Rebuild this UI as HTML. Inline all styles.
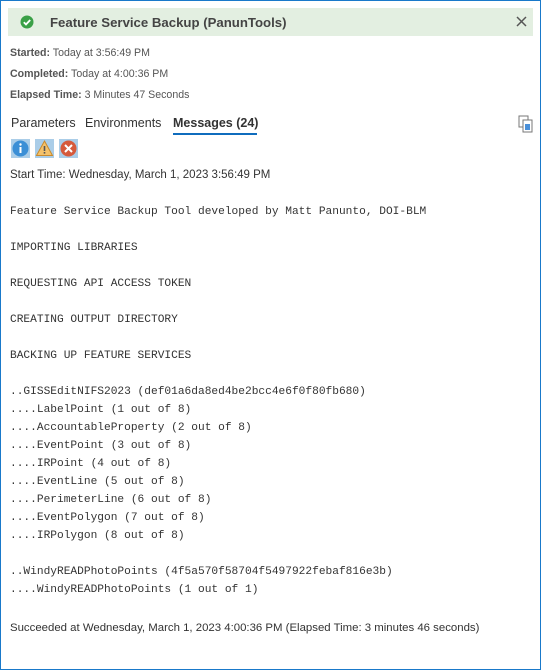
<!DOCTYPE html>
<html><head><style>
body{margin:0;width:541px;height:670px;overflow:hidden;background:#fff;font-family:"Liberation Sans",sans-serif;color:#333}
.frame{position:absolute;left:0;top:0;width:539px;height:668px;border:1px solid #1979ca}
.hdr{position:absolute;left:8px;top:8px;width:525px;height:28px;background:#e3efe1}
.t{position:absolute;white-space:pre;font-size:12px;line-height:14px}
.m{position:absolute;white-space:pre;font-family:"Liberation Mono",monospace;font-size:11.2px;line-height:14px;color:#333}
.ic{position:absolute;top:139px;width:19px;height:19px;background:#aacde8}
</style></head><body>
<div class="frame"></div>
<div class="hdr"></div>
<svg style="position:absolute;left:20px;top:15px" width="14" height="14"><circle cx="7" cy="7" r="6.5" fill="#3aa047"/><path d="M3.8 7.2l2.2 2.2 4.2-4.4" stroke="#fff" stroke-width="1.8" fill="none"/></svg>
<div class="t" style="left:50px;top:14px;font-size:13.2px;line-height:17px;font-weight:bold;color:#444">Feature Service Backup (PanunTools)</div>
<svg style="position:absolute;left:516px;top:16px" width="11" height="11"><path d="M1 1l9 9M10 1L1 10" stroke="#555" stroke-width="1.5"/></svg>
<div class="t" style="left:10px;top:46px;font-size:10.6px;color:#555"><b>Started:</b> Today at 3:56:49 PM</div>
<div class="t" style="left:10px;top:67px;font-size:10.6px;color:#555"><b>Completed:</b> Today at 4:00:36 PM</div>
<div class="t" style="left:10px;top:88px;font-size:10.6px;color:#555"><b>Elapsed Time:</b> 3 Minutes 47 Seconds</div>
<div class="t" style="left:11px;top:116px;font-size:12.5px;color:#333">Parameters</div>
<div class="t" style="left:85px;top:116px;font-size:12.5px;color:#333">Environments</div>
<div class="t" style="left:173px;top:116px;font-size:12.5px;color:#333;font-weight:bold">Messages (24)</div>
<div style="position:absolute;left:173px;top:133px;width:84px;height:2px;background:#0f6cbd"></div>
<svg style="position:absolute;left:518px;top:115px" width="16" height="18"><rect x="1" y="1" width="9" height="11" fill="#fff" stroke="#777"/><rect x="5" y="5" width="9" height="12" fill="#fff" stroke="#777"/><rect x="7" y="9" width="5" height="6" fill="#4a90d9"/></svg>
<div class="ic" style="left:11px"><svg width="19" height="19"><circle cx="9.5" cy="9.5" r="8" fill="#3b8fd6"/><rect x="8.5" y="8" width="2" height="6" fill="#fff"/><circle cx="9.5" cy="5.5" r="1.2" fill="#fff"/></svg></div>
<div class="ic" style="left:35px"><svg width="19" height="19"><path d="M9.5 2L17.5 16.5H1.5Z" fill="#f4c26b" stroke="#c98a2c"/><rect x="8.7" y="7" width="1.6" height="5" fill="#555"/><rect x="8.7" y="13" width="1.6" height="1.6" fill="#555"/></svg></div>
<div class="ic" style="left:59px"><svg width="19" height="19"><circle cx="9.5" cy="9.5" r="8" fill="#d65a3c"/><path d="M6 6l7 7M13 6l-7 7" stroke="#fff" stroke-width="2"/></svg></div>
<div class="t" style="left:10px;top:168px;font-size:11.5px">Start Time: Wednesday, March 1, 2023 3:56:49 PM</div>
<div class="m" style="left:10px;top:205px">Feature Service Backup Tool developed by Matt Panunto, DOI-BLM</div>
<div class="m" style="left:10px;top:241px">IMPORTING LIBRARIES</div>
<div class="m" style="left:10px;top:277px">REQUESTING API ACCESS TOKEN</div>
<div class="m" style="left:10px;top:313px">CREATING OUTPUT DIRECTORY</div>
<div class="m" style="left:10px;top:349px">BACKING UP FEATURE SERVICES</div>
<div class="m" style="left:10px;top:385px">..GISSEditNIFS2023 (def01a6da8ed4be2bcc4e6f0f80fb680)</div>
<div class="m" style="left:10px;top:403px">....LabelPoint (1 out of 8)</div>
<div class="m" style="left:10px;top:421px">....AccountableProperty (2 out of 8)</div>
<div class="m" style="left:10px;top:439px">....EventPoint (3 out of 8)</div>
<div class="m" style="left:10px;top:457px">....IRPoint (4 out of 8)</div>
<div class="m" style="left:10px;top:475px">....EventLine (5 out of 8)</div>
<div class="m" style="left:10px;top:493px">....PerimeterLine (6 out of 8)</div>
<div class="m" style="left:10px;top:511px">....EventPolygon (7 out of 8)</div>
<div class="m" style="left:10px;top:529px">....IRPolygon (8 out of 8)</div>
<div class="m" style="left:10px;top:565px">..WindyREADPhotoPoints (4f5a570f58704f5497922febaf816e3b)</div>
<div class="m" style="left:10px;top:583px">....WindyREADPhotoPoints (1 out of 1)</div>
<div class="t" style="left:10px;top:621px;font-size:11.4px">Succeeded at Wednesday, March 1, 2023 4:00:36 PM (Elapsed Time: 3 minutes 46 seconds)</div>
</body></html>
